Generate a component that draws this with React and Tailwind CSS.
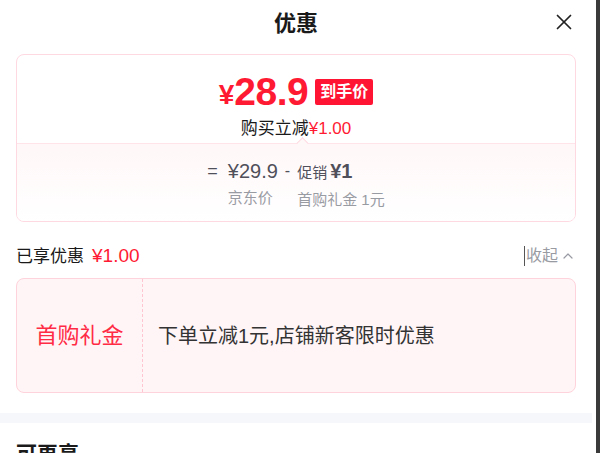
import { X, ChevronUp } from "lucide-react";

const font = { fontFamily: '"Liberation Sans", "Noto Sans CJK SC", sans-serif' };

const PriceCard = () => (
  <div className="mx-4 mt-2 rounded-lg border border-[#ffd9e2] overflow-hidden">
    {/* top: final price */}
    <div className="relative flex flex-col items-center h-[88px] pt-[17px]">
      <div className="flex items-center">
        <span className="text-[#ff1a33] font-bold text-[28px] leading-none mt-[6px]">¥</span>
        <span className="text-[#ff1a33] font-bold text-[39px] leading-none tracking-[-0.5px]">28.9</span>
        <span className="ml-[7px] bg-[#ff1433] text-white font-bold text-[16px] leading-none px-[5px] py-[5px] rounded-[2px]">
          到手价
        </span>
      </div>
      <div className="mt-[9px] text-[17px] leading-none text-[#1a1a1a]">
        购买立减<span className="text-[#ff1a33]">¥1.00</span>
      </div>
      {/* notch */}
      <div className="absolute bottom-[-5px] left-[281px] w-[9px] h-[9px] rotate-45 border-l border-t border-[#ffd9e2] bg-[#fff8f9]" />
    </div>

    {/* bottom: breakdown */}
    <div className="border-t border-[#ffe4ea] bg-gradient-to-b from-[#fff7f8] to-white h-[78px] flex justify-center pt-[15px]">
      <div className="flex items-start text-[#50505a]">
        <span className="text-[18px] leading-[24px] mr-[10px]">=</span>
        <div className="flex flex-col">
          <span className="text-[20px] leading-[24px]">¥29.9</span>
          <span className="text-[15px] text-[#999ba3] mt-[7px] leading-none">京东价</span>
        </div>
        <span className="text-[16px] leading-[24px] mx-[7px]">-</span>
        <div className="flex flex-col">
          <span className="leading-[24px]">
            <span className="text-[15px]">促销</span>
            <span className="text-[20px] font-bold ml-[3px]">¥1</span>
          </span>
          <span className="text-[15px] text-[#999ba3] mt-[7px] leading-none">首购礼金 1元</span>
        </div>
      </div>
    </div>
  </div>
);

export default function App() {
  return (
    <div className="flex w-[600px] h-[453px] overflow-hidden bg-white" style={font}>
      <div className="w-[592px] shrink-0">
        {/* header */}
        <div className="relative h-[46px] flex items-center justify-center">
          <span className="text-[22px] font-bold text-[#1a1a1a]">优惠</span>
          <X className="absolute right-[15px] top-[9px] w-[26px] h-[26px] text-[#222]" strokeWidth={1.6} />
        </div>

        <PriceCard />

        {/* enjoyed row */}
        <div className="mx-4 mt-[22px] flex items-center justify-between h-[24px]">
          <div className="flex items-baseline">
            <span className="text-[17px] text-[#1a1a1a]">已享优惠</span>
            <span className="text-[19px] text-[#ff1a33] ml-[8px]">¥1.00</span>
          </div>
          <div className="flex items-center text-[#999ba3]">
            <span className="w-px h-[20px] bg-[#555] mr-[1px]" />
            <span className="text-[16px]">收起</span>
            <ChevronUp className="w-[16px] h-[16px] ml-[2px]" strokeWidth={1.8} />
          </div>
        </div>

        {/* coupon */}
        <div className="mx-4 mt-[10px] h-[115px] flex rounded-lg border border-[#ffd3db] bg-[#fff5f7]">
          <div className="w-[126px] border-r border-dashed border-[#ffc5d0] flex items-center justify-center">
            <span className="text-[22px] text-[#ff2b45]">首购礼金</span>
          </div>
          <div className="flex-1 flex items-center pl-[15px]">
            <span className="text-[20px] text-[#333]">下单立减1元,店铺新客限时优惠</span>
          </div>
        </div>

        <div className="mt-[20px] h-[10px] bg-[#f6f7fa] -mr-2" />

        <div className="px-4 pt-[20px] text-[21px] font-bold text-[#1a1a1a] leading-none">可再享</div>
      </div>
      <div className="w-[4px] h-full bg-white" />
      <div className="w-[4px] h-full bg-[#3a3a3a]" />
    </div>
  );
}
